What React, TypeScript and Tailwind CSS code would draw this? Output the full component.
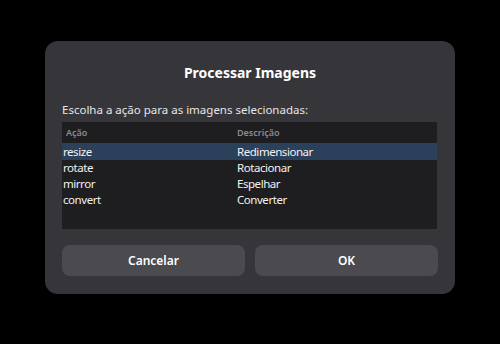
const rows = [
  { action: "resize", desc: "Redimensionar", selected: true },
  { action: "rotate", desc: "Rotacionar" },
  { action: "mirror", desc: "Espelhar" },
  { action: "convert", desc: "Converter" },
];

export default function App() {
  return (
    <div
      className="flex h-[344px] w-[500px] items-start justify-center bg-black pt-[41px]"
      style={{ fontFamily: '"Noto Sans", "Open Sans", sans-serif' }}
    >
      <div className="flex h-[253px] w-[410px] flex-col rounded-[13px] bg-[#36363a] px-[17px]">
        <h1 className="mt-[22px] text-center text-[14px] font-bold leading-5 text-white">
          Processar Imagens
        </h1>
        <p className="mt-[19px] text-[11.5px] leading-4 text-[#e6e6e6]">
          Escolha a ação para as imagens selecionadas:
        </p>
        <div className="mt-[4px] h-[107px] w-[375px] bg-[#1e1e20]">
          <div className="flex h-[21px] items-center text-[9px] font-semibold text-[#8a8a8d]">
            <span className="w-[175px] pl-[4px]">Ação</span>
            <span>Descrição</span>
          </div>
          <div>
            {rows.map((r) => (
              <div
                key={r.action}
                className={
                  "flex h-4 items-center text-[11.5px] leading-4 tracking-[-0.45px] text-[#f2f2f2] " +
                  (r.selected ? "h-[17px] bg-[#2b405b]" : "")
                }
              >
                <span className="w-[175px] pl-[1px]">{r.action}</span>
                <span>{r.desc}</span>
              </div>
            ))}
          </div>
        </div>
        <div className="mt-4 flex gap-[10px]">
          <button className="h-[31px] flex-1 rounded-[8px] bg-[#4a4a4f] text-[12px] font-semibold text-white">
            Cancelar
          </button>
          <button className="h-[31px] flex-1 rounded-[8px] bg-[#4a4a4f] text-[12px] font-semibold text-white">
            OK
          </button>
        </div>
      </div>
    </div>
  );
}
